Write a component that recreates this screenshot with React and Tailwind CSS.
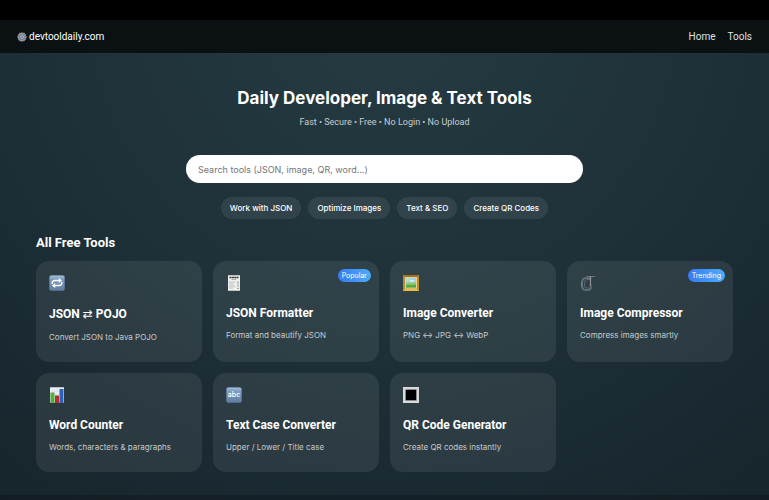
const filters = ['Work with JSON', 'Optimize Images', 'Text & SEO', 'Create QR Codes'];

const tools = [
    {
        id: 'pojo',
        title: <>JSON <span className="font-['DejaVu_Sans'] text-[12px] font-normal leading-[18px]">⇄</span> POJO</>,
        text: 'Convert JSON to Java POJO',
        Icon: RepeatIcon,
    },
    { id: 'formatter', title: 'JSON Formatter', text: 'Format and beautify JSON', badge: 'Popular', Icon: ReceiptIcon },
    { id: 'converter', title: 'Image Converter', text: 'PNG ↔ JPG ↔ WebP', Icon: PictureIcon },
    { id: 'compressor', title: 'Image Compressor', text: 'Compress images smartly', badge: 'Trending', Icon: ClampIcon },
    { id: 'counter', title: 'Word Counter', text: 'Words, characters & paragraphs', Icon: ChartIcon },
    { id: 'case', title: 'Text Case Converter', text: 'Upper / Lower / Title case', Icon: LettersIcon },
    { id: 'qr', title: 'QR Code Generator', text: 'Create QR codes instantly', Icon: SquareIcon },
];

function GearIcon() {
    const teeth = [0, 30, 60, 90, 120, 150];
    return (
        <svg className="size-[10px]" viewBox="0 0 20 20" fill="none" aria-hidden="true">
            {teeth.map((angle) => (
                <path key={angle} d="M10 0.5v19" stroke="#a9afb8" strokeWidth="2.2" transform={`rotate(${angle} 10 10)`} />
            ))}
            <circle cx="10" cy="10" r="7.2" fill="#687079" stroke="#a2a8b0" strokeWidth="1.6" />
            {teeth.map((angle) => (
                <path key={angle} d="M10 4v12" stroke="#a5abb3" strokeWidth="0.9" transform={`rotate(${angle} 10 10)`} />
            ))}
            <circle cx="10" cy="10" r="3" fill="#7b828b" stroke="#c3c8ce" />
        </svg>
    );
}

function BlueTile({ id, children }) {
    return (
        <svg className="size-4" viewBox="0 0 32 32" fill="none" aria-hidden="true">
            <defs>
                <linearGradient id={id} x1="0" y1="0" x2="0" y2="1">
                    <stop offset="0" stopColor="#a9c2dc" />
                    <stop offset="0.25" stopColor="#7f9dc0" />
                    <stop offset="1" stopColor="#607c9f" />
                </linearGradient>
            </defs>
            <rect x="0.5" y="0.5" width="31" height="31" rx="5" fill={`url(#${id})`} stroke="#53708f" />
            {children}
        </svg>
    );
}

function RepeatIcon() {
    return (
        <BlueTile id="repeat-tile">
            <path d="M6.500 18v-2a5 5 0 0 1 5-5h10M25.500 14v2a5 5 0 0 1-5 5h-10" stroke="#fff" strokeWidth="3" />
            <path d="M19.500 6l6.500 5-6.500 5zM12.500 16l-6.500 5 6.500 5z" fill="#fff" />
        </BlueTile>
    );
}

function LettersIcon() {
    return (
        <BlueTile id="letters-tile">
            <text x="16" y="20" textAnchor="middle" fill="#fff" fontSize="14" fontWeight="500" fontFamily="Inter, sans-serif">
                abc
            </text>
        </BlueTile>
    );
}

function ReceiptIcon() {
    return (
        <svg className="size-4" viewBox="0 0 32 32" fill="none" aria-hidden="true">
            <path d="M4 0.500h24v31H4z" fill="#f0f0ee" />
            <path d="M7 5h18" stroke="#353535" strokeWidth="3" strokeDasharray="4 .7" />
            <path d="M11 9h10" stroke="#8a8a8a" strokeWidth="1.200" />
            <path d="M6 14h12M6 18h9M6 22h12M6 26h8" stroke="#a2a2a2" strokeWidth="1.200" />
            <path d="M22 14h4M22 18h4M22 22h4M22 27h4" stroke="#828282" strokeWidth="1.400" />
            <path d="M4 16h24M4 24h24" stroke="#cacaca" strokeWidth="0.800" />
        </svg>
    );
}

function PictureIcon() {
    return (
        <svg className="size-4" viewBox="0 0 32 32" fill="none" aria-hidden="true">
            <rect width="32" height="32" fill="#b98a2e" />
            <path d="M0 32l5-5h22l5 5z" fill="#e6bd45" />
            <path d="M0 0h32l-5 5H5z" fill="#9b7128" />
            <rect x="4" y="4" width="24" height="23" fill="#ead391" />
            <rect x="6" y="6" width="20" height="19" fill="#9bd3e8" />
            <path d="M6 17c5-4 9 1 20-3v11H6z" fill="#8fc75a" />
            <path d="M6 21c7-3 12 1 20-2v6H6z" fill="#57a845" />
            <circle cx="9.500" cy="9.500" r="2.500" fill="#f8dc60" />
            <path d="M14 12q2-4 5-1 4-1 5 2H14z" fill="#e9f5f8" />
        </svg>
    );
}

function ClampIcon() {
    return (
        <svg className="size-4" viewBox="0 0 32 32" fill="none" aria-hidden="true">
            <path d="M22 6H12Q4 6 4 16v5q0 9 8 9h4q6 0 6-7" stroke="#60727d" strokeWidth="3.500" />
            <path d="M20 9h-6q-5 1-5 8v4q0 5 4 5h5" stroke="#73848e" strokeWidth="1.200" />
            <path d="M3.500 15v9" stroke="#93a2aa" strokeWidth="1" />
            <path d="M21 2v20" stroke="#77858d" strokeWidth="2.500" />
            <path d="M21 3v18" stroke="#b4babe" strokeWidth="1" strokeDasharray="1.500 1" />
            <path d="M13 3h17" stroke="#8e979c" strokeWidth="1.300" />
            <path d="M19 7h4M19 22h4" stroke="#a87b65" strokeWidth="1.800" />
        </svg>
    );
}

function ChartIcon() {
    return (
        <svg className="size-4" viewBox="0 0 32 32" fill="none" aria-hidden="true">
            <rect x="2" y="0.500" width="28" height="31" fill="#e8edf3" />
            <path d="M2 8h28M2 16h28M2 24h28" stroke="#c7d2df" strokeWidth="0.800" />
            <rect x="3" y="11" width="8" height="21" fill="#55ad40" />
            <rect x="12" y="17" width="8" height="15" fill="#b52e2c" />
            <rect x="21" y="4" width="8" height="28" fill="#2c62bb" />
        </svg>
    );
}

function SquareIcon() {
    return (
        <svg className="size-4" viewBox="0 0 32 32" aria-hidden="true">
            <rect width="32" height="32" fill="#d9dad9" />
            <rect x="5" y="5" width="22" height="22" fill="#000" stroke="#aaa" />
        </svg>
    );
}

function ToolCard({ tool }) {
    const { title, text, badge, Icon } = tool;
    return (
        <a href="#" className="relative block rounded-[13px] bg-white/8 px-[13px] pt-[14px] pb-[19px]">
            {badge && (
                <span className="absolute top-2 right-2 rounded-full bg-linear-to-r from-[#397af2] to-[#4eacf8] px-1 font-['Inter',sans-serif] text-[7px] leading-[13px] text-white">
                    {badge}
                </span>
            )}
            <Icon />
            <h3 className="mt-[14px] text-[12px] leading-4 font-bold">{title}</h3>
            <p className="mt-2 font-['Inter',sans-serif] text-[8px] leading-3 text-[#c5cbcd]">{text}</p>
        </a>
    );
}

export default function App() {
    return (
        <div className="flex min-h-screen flex-col bg-[radial-gradient(circle_at_top,#263b43_0%,#20333b_40%,#17252c_100%)] font-['Roboto','Inter',sans-serif] text-white">
            <div className="h-5 bg-black" />
            <header className="flex h-[33px] items-center justify-between bg-[#0b1113] px-[17px]">
                <a href="#" className="flex items-center gap-[2px] text-[10px]">
                    <GearIcon />
                    devtooldaily.com
                </a>
                <nav className="flex gap-3 text-[10px] text-[#dfe1e2]">
                    <a href="#">Home</a>
                    <a href="#">Tools</a>
                </nav>
            </header>

            <main className="grow px-9 pt-8 pb-[23px]">
                <section className="flex flex-col items-center">
                    <h1 className="font-['Inter',sans-serif] text-[17px] leading-[26px] font-bold">Daily Developer, Image & Text Tools</h1>
                    <p className="mt-1 text-[9px] leading-[14px] text-[#c8cdcf]">Fast • Secure • Free • No Login • No Upload</p>
                    <input
                        type="search"
                        aria-label="Search tools"
                        placeholder="Search tools (JSON, image, QR, word...)"
                        className="mt-[26px] h-7 w-full max-w-[397px] rounded-full bg-white px-3 font-['Inter',sans-serif] text-[9px] text-gray-800 outline-none placeholder:text-[#757575]"
                    />
                    <div className="mt-[14px] flex flex-wrap justify-center gap-[7px]">
                        {filters.map((name) => (
                            <button key={name} type="button" className="h-[22px] rounded-full bg-white/8 px-[9px] font-['Inter',sans-serif] text-[8px] font-medium">
                                {name}
                            </button>
                        ))}
                    </div>
                </section>

                <section>
                    <h2 className="mt-[14px] text-[13px] leading-5 font-bold">All Free Tools</h2>
                    <div className="mt-2 grid grid-cols-2 gap-[11px] sm:grid-cols-4">
                        {tools.map((tool) => (
                            <ToolCard key={tool.id} tool={tool} />
                        ))}
                    </div>
                </section>
            </main>
            <footer className="h-[5px] bg-black/20" />
        </div>
    );
}
